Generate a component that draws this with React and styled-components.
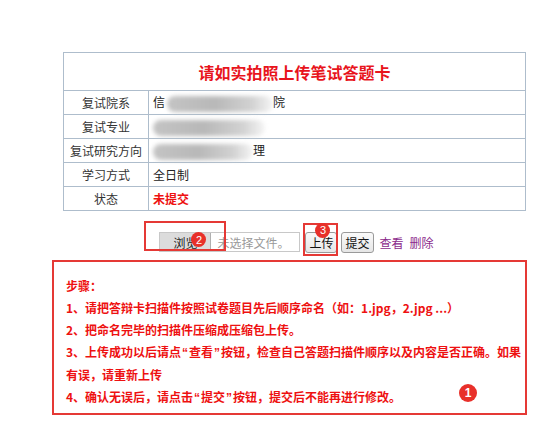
import React from "react";
import styled, { createGlobalStyle } from "styled-components";

const GlobalStyle = createGlobalStyle`
  html, body {
    margin: 0;
    padding: 0;
    background: #ffffff;
  }
  body {
    font-family: "Noto Sans CJK SC", "Liberation Sans", sans-serif;
    font-size: 12px;
    color: #222;
  }
`;

const Page = styled.div`
  width: 554px;
  height: 442px;
  padding-top: 52px;
  box-sizing: border-box;
  overflow: hidden;
`;

const Table = styled.table`
  width: 463px;
  margin-left: 63px;
  border-collapse: collapse;
  background: #fff;
  td {
    border: 1px solid #aebdcc;
  }
`;

const TitleCell = styled.td`
  height: 37px;
  padding: 0;
  text-align: center;
  color: #e8141c;
  font-size: 16px;
  font-weight: bold;
`;

const Row = styled.tr`
  height: 24px;
`;

const Label = styled.td`
  width: 84px;
  padding: 0;
  text-align: center;
  color: #333;
  font-size: 12px;
`;

const Value = styled.td`
  padding: 0 0 0 4px;
  color: ${(p) => (p.$red ? "#ee1111" : "#222")};
  font-weight: ${(p) => (p.$red ? "bold" : "normal")};
  font-size: 12px;
  white-space: nowrap;
`;

const Smudge = styled.span`
  display: inline-block;
  vertical-align: middle;
  width: ${(p) => p.$w}px;
  height: 16px;
  margin-left: ${(p) => p.$ml || 0}px;
  border-radius: 8px;
  background: linear-gradient(90deg, #c4c4c4 0%, #b8b8b8 45%, #d2d2d2 80%, rgba(230,230,230,0.4) 100%);
  filter: blur(2px);
`;

const UploadRow = styled.div`
  display: flex;
  align-items: center;
  justify-content: center;
  gap: 4px;
  width: 463px;
  margin: 21px 0 0 63px;
  height: 20px;
  padding-left: 4px;
  box-sizing: border-box;
`;

const FileInput = styled.div`
  position: relative;
  display: flex;
  align-items: center;
  width: 139px;
  height: 18px;
  border: 1px solid #c8c8c8;
  background: #fff;
  margin-right: 1px;
`;

const BrowseBtn = styled.span`
  display: flex;
  align-items: center;
  justify-content: center;
  width: 50px;
  height: 18px;
  background: #dcdcdc;
  border-right: 1px solid #b0b0b0;
  color: #222;
  font-size: 12px;
`;

const FileText = styled.span`
  margin-left: 6px;
  color: #999;
  font-size: 12px;
`;

const Btn = styled.button`
  position: relative;
  height: 21px;
  padding: 0 3px;
  border: 1px solid #9a9a9a;
  border-radius: 3px;
  background: linear-gradient(#fafafa, #e6e6e6);
  font-family: "Noto Sans CJK SC", sans-serif;
  font-size: 12px;
  color: #111;
`;

const Link = styled.a`
  color: #8b2a8b;
  font-size: 12px;
  margin-left: 2px;
  text-decoration: none;
`;

const Mark = styled.span`
  position: absolute;
  left: ${(p) => p.$l}px;
  top: ${(p) => p.$t}px;
  width: ${(p) => p.$w}px;
  height: ${(p) => p.$h}px;
  border: 2px solid #e53935;
  box-sizing: border-box;
  pointer-events: none;
`;

const Badge = styled.span`
  position: absolute;
  left: ${(p) => p.$l}px;
  top: ${(p) => p.$t}px;
  width: ${(p) => p.$s}px;
  height: ${(p) => p.$s}px;
  border-radius: 50%;
  background: #e8302a;
  color: #fff;
  font-family: "Liberation Sans", sans-serif;
  font-size: ${(p) => p.$fs}px;
  display: flex;
  align-items: center;
  justify-content: center;
`;

const Steps = styled.div`
  position: relative;
  width: 475px;
  height: 155px;
  margin: 8px 0 0 52px;
  border: 2px solid #e53935;
  box-sizing: border-box;
  padding: 13px 0 0 12px;
  color: #ee1111;
  font-weight: bold;
  font-size: 12px;
  line-height: 22px;
  white-space: nowrap;
`;

const Line = styled.div``;

const Q = styled.span`
  font-family: "Liberation Sans", sans-serif;
  margin: 0 1px;
`;

export default function App() {
  return (
    <Page>
      <GlobalStyle />
      <Table>
        <tbody>
          <tr>
            <TitleCell colSpan={2}>请如实拍照上传笔试答题卡</TitleCell>
          </tr>
          <Row>
            <Label>复试院系</Label>
            <Value>
              信<Smudge $w={106} $ml={2} />院
            </Value>
          </Row>
          <Row>
            <Label>复试专业</Label>
            <Value>
              <Smudge $w={112} />
            </Value>
          </Row>
          <Row>
            <Label>复试研究方向</Label>
            <Value>
              <Smudge $w={100} />理
            </Value>
          </Row>
          <Row>
            <Label>学习方式</Label>
            <Value>全日制</Value>
          </Row>
          <Row>
            <Label>状态</Label>
            <Value $red>未提交</Value>
          </Row>
        </tbody>
      </Table>

      <UploadRow>
        <FileInput>
          <BrowseBtn>浏览</BrowseBtn>
          <FileText>未选择文件。</FileText>
          <Mark $l={-16} $t={-12} $w={82} $h={30} />
          <Badge $l={31} $t={-1} $s={15} $fs={11}>2</Badge>
        </FileInput>
        <Btn>
          上传
          <Mark $l={-3} $t={-10} $w={35} $h={33} />
          <Badge $l={9} $t={-10} $s={15} $fs={11}>3</Badge>
        </Btn>
        <Btn>提交</Btn>
        <Link>查看</Link>
        <Link>删除</Link>
      </UploadRow>

      <Steps>
        <Line>步骤：</Line>
        <Line>1、请把答辩卡扫描件按照试卷题目先后顺序命名（如：1.jpg，2.jpg ...）</Line>
        <Line>2、把命名完毕的扫描件压缩成压缩包上传。</Line>
        <Line>
          3、上传成功以后请点<Q>“</Q>查看<Q>”</Q>按钮，检查自己答题扫描件顺序以及内容是否正确。如果
        </Line>
        <Line>有误，请重新上传</Line>
        <Line>
          4、确认无误后，请点击<Q>“</Q>提交<Q>”</Q>按钮，提交后不能再进行修改。
        </Line>
        <Badge $l={405} $t={122} $s={18} $fs={12}>1</Badge>
      </Steps>
    </Page>
  );
}
